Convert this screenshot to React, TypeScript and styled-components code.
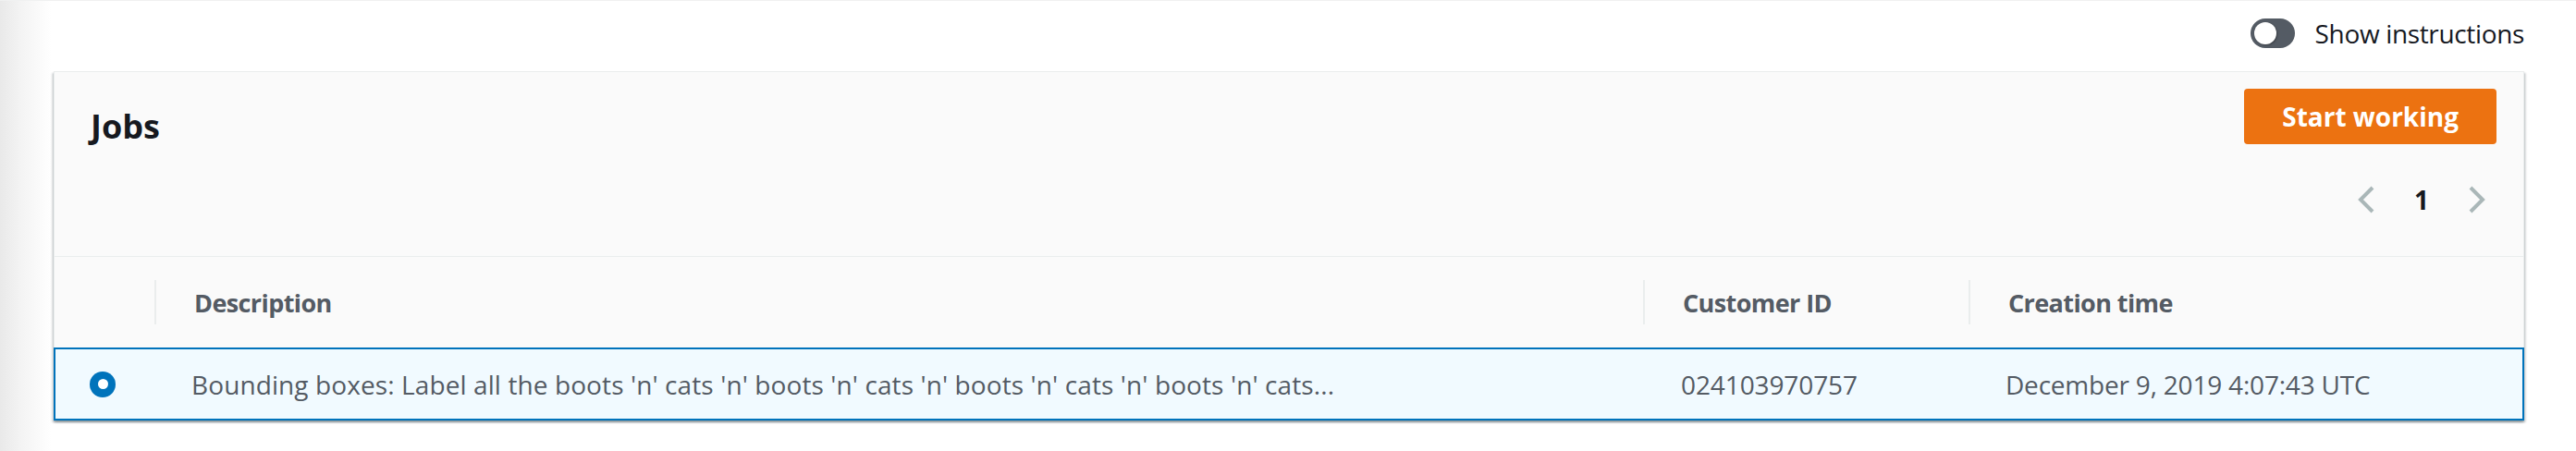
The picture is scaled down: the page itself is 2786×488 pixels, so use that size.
import React from "react";
import styled, { createGlobalStyle } from "styled-components";

const Global = createGlobalStyle`
  html, body { margin: 0; padding: 0; }
  body {
    background: linear-gradient(to right, #e9e9e9 0px, #f4f4f4 24px, #ffffff 56px);
    font-family: "Open Sans", "Noto Sans", Arial, sans-serif;
    border-top: 1px solid #f0f1f1;
  }
`;

const Page = styled.div`
  padding: 0 56px 40px 58px;
`;

const TopBar = styled.div`
  display: flex;
  justify-content: flex-end;
  align-items: center;
  gap: 22px;
  padding-top: 19px;
  height: 32px;
  margin-bottom: 25px;
`;

const Toggle = styled.span`
  display: inline-flex;
  align-items: center;
  box-sizing: border-box;
  width: 48px;
  height: 32px;
  border-radius: 16px;
  background: #545b64;
  padding-left: 4px;
`;

const Knob = styled.span`
  width: 24px;
  height: 24px;
  border-radius: 50%;
  background: #ffffff;
  box-shadow: 1px 1px 2px rgba(0, 0, 0, 0.3);
`;

const ToggleLabel = styled.span`
  font-size: 28px;
  line-height: 32px;
  color: #16191f;
  letter-spacing: -0.35px;
`;

const Card = styled.div`
  border: 1px solid #eaeded;
  border-bottom: none;
  background: #fafafa;
  box-shadow: 0 2px 2px 0 rgba(0, 28, 36, 0.3), 2px 2px 2px 0 rgba(0, 28, 36, 0.12),
    -2px 2px 2px 0 rgba(0, 28, 36, 0.12);
`;

const Header = styled.div`
  display: flex;
  justify-content: space-between;
  align-items: flex-start;
  box-sizing: border-box;
  height: 200px;
  padding: 18px 29px 0 39px;
  border-bottom: 1px solid #eaeded;
`;

const Title = styled.h2`
  margin: 17px 0 0 0;
  font-size: 36px;
  line-height: 48px;
  font-weight: 700;
  color: #16191f;
`;

const Actions = styled.div`
  display: flex;
  flex-direction: column;
  align-items: flex-end;
`;

const PrimaryButton = styled.button`
  height: 60px;
  padding: 0 41px;
  border: none;
  border-radius: 4px;
  background: #ec7211;
  color: #ffffff;
  font-family: inherit;
  font-size: 28px;
  font-weight: 700;
  line-height: 60px;
  cursor: pointer;
`;

const Pagination = styled.div`
  display: flex;
  align-items: center;
  gap: 43px;
  height: 48px;
  margin-top: 36px;
  margin-right: 12px;
`;

const PageNumber = styled.span`
  font-size: 28px;
  font-weight: 700;
  color: #16191f;
  line-height: 48px;
`;

const Chevron = ({ dir }: { dir: "left" | "right" }) => (
  <svg width="18" height="30" viewBox="0 0 18 30" fill="none">
    <polyline
      points={dir === "left" ? "16,2 3,15 16,28" : "2,2 15,15 2,28"}
      stroke="#aab7b8"
      strokeWidth="4"
    />
  </svg>
);

const Grid = styled.div<{ $first: number }>`
  display: grid;
  grid-template-columns: ${(p) => p.$first}px 1610px 352px 1fr;
  align-items: center;
`;

const HeadRow = styled(Grid)`
  height: 98px;
`;

const HeadCell = styled.div`
  display: flex;
  align-items: center;
  height: 100%;
`;

const Divider = styled.span`
  width: 2px;
  height: 48px;
  background: #eaeded;
`;

const HeadLabel = styled.span`
  margin-left: 41px;
  font-size: 27px;
  font-weight: 700;
  color: #545b64;
  letter-spacing: -0.6px;
`;

const BodyRow = styled(Grid)`
  height: 79px;
  box-sizing: border-box;
  margin: 0 -1px;
  border: 2px solid #0073bb;
  background: #f1faff;
`;

const RadioCell = styled.div`
  display: flex;
  align-items: center;
  padding-left: 37px;
`;

const Radio = styled.span`
  display: flex;
  align-items: center;
  justify-content: center;
  width: 28px;
  height: 28px;
  border-radius: 50%;
  background: #0073bb;
  &::after {
    content: "";
    width: 11px;
    height: 11px;
    border-radius: 50%;
    background: #ffffff;
  }
`;

const Cell = styled.div<{ $pad: number; $track: number }>`
  padding-left: ${(p) => p.$pad}px;
  font-size: 28px;
  color: #545b64;
  white-space: nowrap;
  overflow: hidden;
  letter-spacing: ${(p) => p.$track}px;
`;

export default function App() {
  return (
    <>
      <Global />
      <Page>
        <TopBar>
          <Toggle>
            <Knob />
          </Toggle>
          <ToggleLabel>Show instructions</ToggleLabel>
        </TopBar>
        <Card>
          <Header>
            <Title>Jobs</Title>
            <Actions>
              <PrimaryButton>Start working</PrimaryButton>
              <Pagination>
                <Chevron dir="left" />
                <PageNumber>1</PageNumber>
                <Chevron dir="right" />
              </Pagination>
            </Actions>
          </Header>
          <HeadRow $first={108}>
            <HeadCell />
            <HeadCell>
              <Divider />
              <HeadLabel>Description</HeadLabel>
            </HeadCell>
            <HeadCell>
              <Divider />
              <HeadLabel>Customer ID</HeadLabel>
            </HeadCell>
            <HeadCell>
              <Divider />
              <HeadLabel>Creation time</HeadLabel>
            </HeadCell>
          </HeadRow>
          <BodyRow $first={107}>
            <RadioCell>
              <Radio />
            </RadioCell>
            <Cell $pad={40} $track={0.1}>
              Bounding boxes: Label all the boots 'n' cats 'n' boots 'n' cats 'n' boots 'n' cats 'n' boots 'n' cats...
            </Cell>
            <Cell $pad={41} $track={-0.1}>024103970757</Cell>
            <Cell $pad={40} $track={-0.2}>December 9, 2019 4:07:43 UTC</Cell>
          </BodyRow>
        </Card>
      </Page>
    </>
  );
}
